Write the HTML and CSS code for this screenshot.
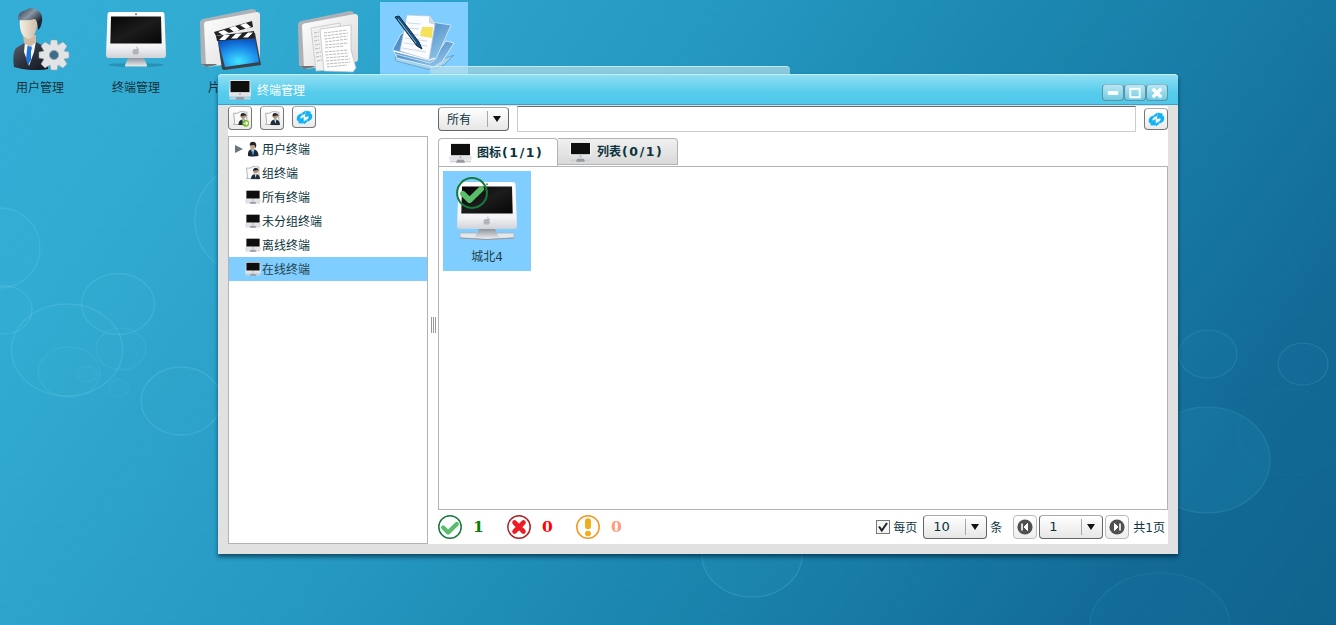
FILE: index.html
```html
<!DOCTYPE html>
<html lang="zh-CN">
<head>
<meta charset="utf-8">
<title>终端管理</title>
<link rel="stylesheet" href="styles.css">
</head>
<body>
<svg class="defs" aria-hidden="true">
  <defs>
    <linearGradient id="gWhite" x1="0" y1="0" x2="0" y2="1"><stop offset="0" stop-color="#fff"/><stop offset=".75" stop-color="#f4f4f6"/><stop offset="1" stop-color="#cfd2d8"/></linearGradient>
    <linearGradient id="gScreen" x1="0" y1="0" x2="1" y2="1"><stop offset="0" stop-color="#050505"/><stop offset=".5" stop-color="#1c1c1c"/><stop offset="1" stop-color="#050505"/></linearGradient>
    <linearGradient id="gFoot" x1="0" y1="0" x2="0" y2="1"><stop offset="0" stop-color="#8d949c"/><stop offset="1" stop-color="#eceef0"/></linearGradient>
    <linearGradient id="gSuit" x1="0" y1="0" x2="1" y2="1"><stop offset="0" stop-color="#5b6472"/><stop offset=".5" stop-color="#2c323d"/><stop offset="1" stop-color="#11151d"/></linearGradient>
    <linearGradient id="gHair" x1="0" y1="0" x2="1" y2="1"><stop offset="0" stop-color="#27313f"/><stop offset=".4" stop-color="#8a97a6"/><stop offset=".75" stop-color="#1b2431"/></linearGradient>
    <linearGradient id="gFace" x1="0" y1="0" x2="1" y2="0"><stop offset="0" stop-color="#f7efe2"/><stop offset="1" stop-color="#cbb9a4"/></linearGradient>
    <radialGradient id="gFilm" cx=".5" cy=".8" r=".8"><stop offset="0" stop-color="#3fe4ff"/><stop offset=".55" stop-color="#1e93ee"/><stop offset="1" stop-color="#0b56c4"/></radialGradient>
    <linearGradient id="gFolder" x1="0" y1="0" x2="1" y2="1"><stop offset="0" stop-color="#fff"/><stop offset="1" stop-color="#d9d9db"/></linearGradient>
    <linearGradient id="gBlue" x1="0" y1="0" x2="1" y2="1"><stop offset="0" stop-color="#2f6fb2"/><stop offset="1" stop-color="#9fd2f2"/></linearGradient>
    <symbol id="monitor" viewBox="0 0 60 56">
      <ellipse cx="30" cy="53" rx="28" ry="2" fill="#1c6f8e" opacity=".45"/>
      <path d="M22 46h16l3 7q.5 1.500-1 1.500H20q-1.500 0-1-1.500z" fill="url(#gFoot)"/>
      <path d="M4 0h52q2.500 0 2.500 3L60 43q0 3-3 3H3q-3 0-3-3L1.500 3Q1.500 0 4 0z" fill="url(#gWhite)"/>
      <path d="M5 4.500h50l.7 27H4.300z" fill="url(#gScreen)"/>
      <circle cx="30" cy="2.200" r="1" fill="#777"/>
      <path d="M30 37c2-1 3 0 3 0q-1.500 2 0 3.500-1 2.500-2.500 2.200-1-.4-2 0-2 0-2-3.200 0-3 3.500-2.500zm0-.7q0-1.600 1.500-1.800 0 1.500-1.500 1.800z" fill="#b1b5bb"/>
    </symbol>
    <symbol id="wideMonitor" viewBox="0 0 60 58">
      <path d="M3 51h54v5q-27 3-54 0z" fill="#e4e7ea" stroke="#aab3bb" stroke-width=".8"/>
      <path d="M22 47h16l4 8q-12 4-24 0z" fill="url(#gFoot)"/>
      <path d="M3 56q27 3 54 0" fill="none" stroke="#8d99a5"/>
      <path d="M4 0h52q2.500 0 2.500 3L60 44q0 3-3 3H3q-3 0-3-3L1.500 3Q1.500 0 4 0z" fill="url(#gWhite)"/>
      <path d="M5 4.500h50l.7 27H4.300z" fill="url(#gScreen)"/>
      <circle cx="30" cy="2.200" r="1" fill="#777"/>
      <path d="M30 37c2-1 3 0 3 0q-1.500 2 0 3.500-1 2.500-2.500 2.200-1-.4-2 0-2 0-2-3.200 0-3 3.500-2.500zm0-.7q0-1.600 1.500-1.800 0 1.500-1.500 1.800z" fill="#b1b5bb"/>
    </symbol>
    <symbol id="minimon" viewBox="0 0 23 20">
      <path d="M1 17.500h21v1.800H1z" fill="#d0d3d6"/>
      <path d="M8.500 16h6l1.500 3.800H7z" fill="#969ba1"/>
      <path d="M1.500 0h20l1 16.500H.5z" fill="url(#gWhite)"/>
      <path d="M.7 13.500h21.700l.1 3H.5z" fill="#dfe1e5"/>
      <path d="M2 .9h19v11.300H2z" fill="#0e0e0e"/>
      <circle cx="11.500" cy="14.200" r="1" fill="#a9adb4"/>
    </symbol>
    <symbol id="person" viewBox="0 0 36 62">
      <path d="M1 59Q-1 45 3 40L13 34l10 0 9 5q4 4 3 22-18 3-34-2z" fill="url(#gSuit)"/>
      <path d="M12 34l11-1-2 11-5 14-5-14z" fill="#f4f6fa"/>
      <path d="M14.500 38l3-1 1.500 3-1 3 0 9-3 5-2-6z" fill="#1d72d6"/>
      <path d="M10 27h13v7l-6 5-6-4z" fill="#cdbba6"/>
      <path d="M7 11q-1 9 2 15 3 5 8 5 6-3 8-18l-3-5z" fill="url(#gFace)"/>
      <path d="M5 12Q4 4 13 2q5-4 11 0 6 3 5 11-1 7-4 9 0-8-3-11-7 2-17 1z" fill="url(#gHair)"/>
    </symbol>
    <symbol id="miniPerson" viewBox="0 0 15 16">
      <path d="M2.500 15Q2 9.500 5 8.500h4.500q3.500 1.500 3.500 6.500-5 1-10.500 0z" fill="#1f2733"/>
      <path d="M5.500 8.500H9L7.600 14z" fill="#cfe6f6"/>
      <path d="M7 9.500h1l.3 3-.8 1.500-.8-1.500z" fill="#2a7fd0"/>
      <ellipse cx="7" cy="5.300" rx="2.400" ry="3.300" fill="#c9a888"/>
      <path d="M4.300 4.500Q4 .8 7.500.8q3.800.2 3.200 4.200L9.600 7.500 9 4z" fill="#20262e"/>
    </symbol>
    <symbol id="folder" viewBox="0 0 62 62">
      <path d="M1 54L0 14q0-3 3-4L52 0q3 0 4 2l0 46L3 57z" fill="#aeb2b7"/>
      <path d="M6 57L4 15q0-2 2-2.500L57 3q3 0 3 3v42q0 3-3 3L8 58z" fill="url(#gFolder)"/>
      <path d="M1 55l6 3 10-2-1-1-9 0z" fill="#6e7378"/>
    </symbol>
    <symbol id="contact" viewBox="0 0 16 16">
      <path d="M1.500 3Q5 4 8 1.500L14 2v12L1.500 13.500 2.500 12z" fill="#fafafa" stroke="#a5a5a5" stroke-width=".8"/>
      <path d="M6 14q0-4 3.500-5h2q3.500 1 3.500 5z" fill="#222b38"/>
      <path d="M9.500 9h2.200l-1 4z" fill="#b8def5"/>
      <circle cx="10.600" cy="6.200" r="2.300" fill="#b79274"/>
      <path d="M8 6Q8 2.500 11 3q3 0 2.400 3.500l-1-1.500z" fill="#252525"/>
    </symbol>
    <symbol id="refresh" viewBox="0 0 17 15">
      <path d="M1 10.500Q-.5 5.500 5 3.500L7 5Q3.500 6 4.700 8.700L7.500 7 8 13.500 2 13.200 3 11.800z" fill="#12b3f6"/>
      <path d="M16 4.500Q17.500 9.500 12 11.500L10 10Q13.500 9 12.300 6.300L9 7 9.500.5 15 1.800 14.300 3.200z" fill="#12b3f6"/>
      <path d="M5.500 3.300L9 .8v3L7 5z" fill="#12b3f6"/>
      <path d="M11.500 11.700L8 14.200v-3l2-1.200z" fill="#12b3f6"/>
    </symbol>
    <symbol id="ok" viewBox="0 0 24 24">
      <circle cx="12" cy="12" r="11.200" fill="none" stroke="#167a3d" stroke-width="1.500"/>
      <path d="M5.200 12.500l5 5L18.800 9" fill="none" stroke="#59bd69" stroke-width="4.300" stroke-linejoin="round" stroke-linecap="round"/>
    </symbol>
    <symbol id="bad" viewBox="0 0 24 24">
      <circle cx="12" cy="12" r="11.200" fill="none" stroke="#b01e24" stroke-width="1.500"/>
      <path d="M7.500 7.500l9 9m0-9l-9 9" fill="none" stroke="#ed1c24" stroke-width="4.600" stroke-linecap="round"/>
    </symbol>
    <symbol id="warn" viewBox="0 0 24 24">
      <circle cx="12" cy="12" r="11.200" fill="none" stroke="#f7941e" stroke-width="1.500"/>
      <path d="M12 6.200v5" stroke="#f0ad1c" stroke-width="6" stroke-linecap="round"/>
      <ellipse cx="12" cy="18.500" rx="3" ry="2.700" fill="#f0ad1c"/>
    </symbol>
    <symbol id="skip" viewBox="0 0 16 16">
      <circle cx="8" cy="8" r="7.600" fill="#505050"/>
      <path d="M5 4.500v7" stroke="#fff" stroke-width="1.600"/>
      <path d="M10.500 4.500L7 8l3.500 3.500z" fill="#fff" stroke="#fff"/>
    </symbol>
  </defs>
</svg>
<div class="desktop">
  <svg class="wallpaper" viewBox="0 0 1336 625">
    <g fill="#48bce0" fill-opacity=".05" stroke="#67cbe8" stroke-opacity=".3" stroke-width="1.300">
      <ellipse cx="0" cy="248" rx="40" ry="40"/>
      <ellipse cx="4" cy="310" rx="28" ry="24"/>
      <ellipse cx="118" cy="304" rx="36.500" ry="30.500"/>
      <ellipse cx="67" cy="350" rx="55.500" ry="46"/>
      <ellipse cx="121" cy="349" rx="25" ry="21" stroke-opacity=".16"/>
      <ellipse cx="69" cy="372" rx="31" ry="25" stroke-opacity=".16"/>
      <ellipse cx="87" cy="374" rx="10" ry="8" stroke-opacity=".14"/>
      <ellipse cx="119" cy="388" rx="10" ry="9" stroke-opacity=".12"/>
      <ellipse cx="181" cy="401" rx="40" ry="34"/>
      <ellipse cx="250" cy="220" rx="55" ry="55"/>
      <ellipse cx="752" cy="555" rx="50" ry="42" stroke-opacity=".22"/>
    </g>
    <g fill="#2592b9" fill-opacity=".08" stroke="#48a5c6" stroke-opacity=".28" stroke-width="1.200">
      <ellipse cx="1208" cy="354" rx="29" ry="24"/>
      <ellipse cx="1303" cy="364" rx="25" ry="21"/>
      <ellipse cx="1207" cy="460" rx="63" ry="53" fill-opacity=".2"/>
      <ellipse cx="1290" cy="432" rx="52" ry="43" fill="none" stroke-opacity=".08"/>
      <ellipse cx="1160" cy="626" rx="70" ry="53" stroke-opacity=".18"/>
    </g>
  </svg>

  <div class="shortcuts">
    <div class="shortcut">
      <svg class="shortcut-icon" viewBox="0 0 64 64">
        <use href="#person" x="5" y="2" width="36" height="62"/>
        <g transform="translate(46 49)">
          <g fill="#e1e3e5" stroke="#9ca0a4" stroke-width=".5">
            <path d="M-3-15h6l1 5 5-3 4 4-3 5 5 1v6l-5 1 3 5-4 4-5-3-1 5h-6l-1-5-5 3-4-4 3-5-5-1v-6l5-1-3-5 4-4 5 3z"/>
          </g>
          <circle r="4.600" fill="#3a6f8b" stroke="#a3a7ab"/>
        </g>
      </svg>
      <span>用户管理</span>
    </div>
    <div class="shortcut">
      <svg class="shortcut-icon" viewBox="0 0 64 64"><use href="#monitor" x="2" y="6" width="60" height="56"/></svg>
      <span>终端管理</span>
    </div>
    <div class="shortcut">
      <svg class="shortcut-icon" viewBox="0 0 64 64">
        <use href="#folder" x="0" y="3" width="62" height="62"/>
        <path d="M17 30l38-3 6 32-37 5-2-1z" fill="#39404a"/>
        <path d="M18 34l37-1 4 23-34 5z" fill="url(#gFilm)"/>
        <path d="M14 26l38-11 1 6-37 9z" fill="#202226"/>
        <path d="M18 26l6-2 5 3-6 2zM29 22l6-2 5 4-6 2zM40 19l6-2 5 4-5 2z" fill="#fff"/>
        <path d="M16 30l38-5 1 7-38 3z" fill="#202226"/>
        <path d="M19 34l5-5h6l-5 5zM31 32.500l5-5h6l-5 5zM43 31.500l5-5h5l-5 5z" fill="#fff"/>
      </svg>
      <span class="label-start">片</span>
    </div>
    <div class="shortcut">
      <svg class="shortcut-icon" viewBox="0 0 64 64">
        <use href="#folder" x="2" y="5" width="62" height="62"/>
        <path d="M15 22l29-5 4 46-28 2z" fill="#f0f0f0" stroke="#c2c2c2" stroke-width=".7"/>
        <path d="M24 23l31-4 0 25 5 18-3 4-29-1z" fill="#fff" stroke="#bbb" stroke-width=".7"/>
        <path d="M28 27l23-3M28 30l24-3M28.500 33l23-3M29 36l23-3M29 39l23-2M29 42l18-2M29 46l23-2M29.500 49l23-2M30 52l23-2M30 55l24-2M30.500 58l24-2M31 61l20-2M18 27l5-1M18 31l5-1M18 35l5-1M19 39l5-1M19 43l5-1M20 47l5-1M20 51l5-1M21 55l5-1" stroke="#aaa" stroke-width=".8" stroke-dasharray="3 .8"/>
      </svg>
    </div>
    <div class="shortcut selected">
      <svg class="shortcut-icon" viewBox="0 0 64 64">
        <path d="M3 51l40 4 17-5 2-1-10 10-10 4-7 0L4 55z" fill="#a5d3ee" stroke="#5d9ac4" stroke-width=".8"/>
        <path d="M3 46l38 7 13-18 8 2-12 19-8 5L5 52z" fill="url(#gBlue)" stroke="#e7f5fd" stroke-width=".8"/>
        <path d="M1 43l8-15 30-12 20 3-15 34-6 4L3 48z" fill="url(#gBlue)" stroke="#d5ecfa" stroke-width=".8"/>
        <path d="M2 45l35 9 6-2" fill="none" stroke="#fff" stroke-width="1.300"/>
        <path d="M15 9l23 1 5 8-6 36-29-9z" fill="#fafcff" stroke="#b9c5d1" stroke-width=".7"/>
        <path d="M16 17l12 1M15 22l12 1M14 27l13 2M13 32l22 3M12 37l23 3M10 42l24 4" stroke="#c2d1e3" stroke-width=".8"/>
        <path d="M37 10l0 7 6 2z" fill="#cbd6e0"/>
        <path d="M30 21l11 0-1 11-12-2z" fill="#f6e25a"/>
        <path d="M3 11l4-1 20 26 3 7-5-3z" fill="#1c527f" stroke="#102b44"/>
        <path d="M6 13l18 24" stroke="#8cc0e0"/>
      </svg>
    </div>
  </div>

  <div class="window-behind"></div>

  <section class="window">
    <header class="titlebar">
      <svg class="mini-monitor"><use href="#minimon"/></svg>
      <h1>终端管理</h1>
      <div class="controls">
        <button class="control"><svg viewBox="0 0 20 16"><path d="M4.500 8.500h11" stroke="#fff" stroke-width="4"/></svg></button>
        <button class="control"><svg viewBox="0 0 20 16"><path d="M5 4h10v9H5z" fill="none" stroke="#fff" stroke-width="2"/></svg></button>
        <button class="control"><svg viewBox="0 0 20 16"><path d="M5.500 4l9 9M14.500 4l-9 9" stroke="#fff" stroke-width="3.600"/></svg></button>
      </div>
    </header>
    <div class="content">
      <aside class="sidebar">
        <div class="tools">
          <button class="tool"><svg viewBox="0 0 16 16"><use href="#contact"/><circle cx="13" cy="12.500" r="3.200" fill="#79bd1f"/><path d="M11 12.500h3.600M13 10.700l1.800 1.800-1.800 1.800" stroke="#fff" fill="none"/></svg></button>
          <button class="tool"><svg viewBox="0 0 16 16"><use href="#contact"/></svg></button>
          <button class="tool short"><svg><use href="#refresh"/></svg></button>
        </div>
        <ul class="tree">
          <li><i class="twisty"></i><svg><use href="#miniPerson"/></svg><span>用户终端</span></li>
          <li><i></i><svg><use href="#contact"/></svg><span>组终端</span></li>
          <li><i></i><svg><use href="#minimon"/></svg><span>所有终端</span></li>
          <li><i></i><svg><use href="#minimon"/></svg><span>未分组终端</span></li>
          <li><i></i><svg><use href="#minimon"/></svg><span>离线终端</span></li>
          <li class="current"><i></i><svg><use href="#minimon"/></svg><span>在线终端</span></li>
        </ul>
      </aside>
      <div class="splitter"><i></i></div>
      <main class="main">
        <div class="search">
          <div class="select filter"><span>所有</span><i></i></div>
          <input class="query" type="text" aria-label="搜索">
          <button class="tool short"><svg><use href="#refresh"/></svg></button>
        </div>
        <nav class="tabs">
          <div class="tab active"><svg><use href="#minimon"/></svg><span>图标<b>(1/1)</b></span></div>
          <div class="tab"><svg><use href="#minimon"/></svg><span>列表<b>(0/1)</b></span></div>
        </nav>
        <div class="panel">
          <div class="terminal">
            <div class="terminal-icon">
              <svg class="terminal-monitor"><use href="#wideMonitor"/></svg>
              <svg class="terminal-state"><use href="#ok"/></svg>
            </div>
            <span>城北4</span>
          </div>
        </div>
        <footer class="status">
          <div class="count green"><svg><use href="#ok"/></svg><span>1</span></div>
          <div class="count red"><svg><use href="#bad"/></svg><span>0</span></div>
          <div class="count orange"><svg><use href="#warn"/></svg><span>0</span></div>
          <div class="pager">
            <span class="check"><svg viewBox="0 0 12 12"><path d="M2 5.500l2.800 4L10 2" fill="none" stroke="#222" stroke-width="2"/></svg></span>
            <span class="per">每页</span>
            <div class="select num"><span>10</span><i></i></div>
            <span class="unit">条</span>
            <button class="page-btn"><svg><use href="#skip"/></svg></button>
            <div class="select num"><span>1</span><i></i></div>
            <button class="page-btn next"><svg><use href="#skip"/></svg></button>
            <span class="total">共1页</span>
          </div>
        </footer>
      </main>
    </div>
  </section>
</div>
</body>
</html>
```
FILE: styles.css
```css
* { box-sizing: border-box; }
body {
  margin: 0;
  font: 12px/16px "DejaVu Sans", "Noto Sans CJK SC", sans-serif;
  color: #0b333c;
}
svg { display: block; flex: none; }
button { padding: 0; font: inherit; }
.defs { position: absolute; width: 0; height: 0; }
.desktop {
  position: relative;
  width: 1336px;
  height: 625px;
  overflow: hidden;
  background: linear-gradient(125deg, #34aed6 0%, #31abd2 14%, #2b9fc8 30%, #2699c2 40%, #1c89b2 57%, #177aa4 73%, #126a95 87%, #0f648d 100%);
}
.wallpaper { position: absolute; inset: 0; width: 1336px; height: 625px; }

.shortcuts { position: relative; display: flex; gap: 8px; margin-left: -4px; padding-top: 2px; }
.shortcut {
  display: flex;
  flex-direction: column;
  align-items: center;
  gap: 10px;
  width: 88px;
  height: 100px;
  padding-top: 4px;
  color: #17323d;
}
.shortcut.selected { background: #7fceff; }
.shortcut-icon { width: 64px; height: 64px; overflow: visible; }
.label-start { padding-right: 36px; }

.window-behind {
  position: absolute;
  left: 430px;
  top: 66px;
  width: 360px;
  height: 200px;
  border-top: 1px solid #c4ebf5;
  border-radius: 4px 4px 0 0;
  background: rgba(181, 224, 235, .7);
}
.window {
  position: absolute;
  left: 218px;
  top: 74px;
  width: 960px;
  height: 480px;
  display: flex;
  flex-direction: column;
  border-radius: 4px 4px 0 0;
  background: #e2e1e1;
  box-shadow: 0 3px 4px rgba(0, 35, 55, .65);
}
.titlebar {
  display: flex;
  align-items: center;
  height: 31px;
  padding: 0 10px;
  border-top: 1px solid #c4f1fa;
  border-bottom: 1px solid #3b9fbd;
  border-radius: 4px 4px 0 0;
  background: linear-gradient(#8fdff3, #57ccec 60%, #4fc8eb);
}
.mini-monitor { width: 24px; height: 20px; }
.titlebar h1 { margin: 3px 0 0 5px; font-size: 12px; font-weight: 400; color: #fff; }
.controls { display: flex; margin: 6px 0 0 auto; }
.control {
  width: 22px;
  height: 17px;
  border: 1px solid #5d91a3;
  border-top-color: #8db9c6;
  border-radius: 4px;
  background: linear-gradient(#b7e7f3, #72cbe2);
}
.control svg { width: 20px; height: 15px; }

.content { flex: 1; display: flex; margin: 1px 10px 10px; background: #fff; min-height: 0; }
.sidebar { width: 200px; display: flex; flex-direction: column; }
.tools { display: flex; gap: 8px; height: 30px; }
.tool {
  display: grid;
  place-items: center;
  width: 24px;
  height: 24px;
  border: 1px solid #777;
  border-top-color: #aaa;
  border-radius: 4px;
  background: linear-gradient(#fff, #eaeaea);
}
.tool svg { width: 17px; height: 17px; }
.tool.short { height: 22px; }
.tool.short svg { width: 17px; height: 15px; }
.tree {
  flex: 1;
  margin: 0;
  padding: 0;
  list-style: none;
  border: 1px solid #b2b3b6;
}
.tree li { display: flex; align-items: center; height: 24px; padding-left: 6px; }
.tree li i { width: 10px; }
.tree li span { padding-top: 2px; }
.tree svg { width: 16px; height: 16px; margin: 0 1px 0 0; }
.tree .twisty {
  width: 8px;
  height: 8px;
  margin-right: 2px;
  background: #6c7478;
  clip-path: polygon(0 0, 100% 50%, 0 100%);
}
.tree .current { background: #7fceff; color: #27414c; }

.splitter { width: 10px; display: grid; place-items: center; }
.splitter i {
  width: 5px;
  height: 16px;
  background: repeating-linear-gradient(90deg, #999 0 1px, #fff 1px 2px);
}

.main { flex: 1; display: flex; flex-direction: column; min-width: 0; }
.search { display: flex; align-items: flex-start; height: 32px; }
.select {
  display: flex;
  align-items: center;
  height: 24px;
  border: 1px solid #656565;
  border-top-color: #aaa;
  border-radius: 4px;
  background: linear-gradient(#fff, #e6e6e6);
}
.select span { flex: 1; }
.select i { position: relative; width: 21px; height: 16px; border-left: 1px solid #a7a7a7; }
.select i::after {
  content: "";
  position: absolute;
  left: 5px;
  top: 5px;
  border: solid transparent;
  border-width: 6px 4px 0;
  border-top-color: #111;
}
.filter { width: 71px; margin: 1px 8px 0 0; padding-left: 8px; }
.filter span { padding-top: 2px; }
.query {
  width: 619px;
  height: 26px;
  margin-right: 8px;
  padding: 0 4px;
  border: 1px solid #ccc;
  border-top-color: #686868;
  background: #fff;
}
.search .tool { margin-top: 2px; }
.tabs { display: flex; height: 28px; }
.tab {
  display: flex;
  align-items: center;
  width: 120px;
  height: 27px;
  padding-left: 11px;
  gap: 5px;
  border: 1px solid #b2b3b6;
  border-left-width: 0;
  border-radius: 0 4px 0 0;
  background: linear-gradient(#f0f0f0, #d9d9d9);
  font-weight: 700;
}
.tab.active { height: 28px; border-left-width: 1px; border-radius: 4px 4px 0 0; border-bottom: 0; background: #fff; padding-left: 10px; }
.tab span { display: flex; padding-top: 1px; }
.tab b { margin-left: 1px; font-size: 12.500px; letter-spacing: 1.600px; }
.tab svg { width: 23px; height: 20px; }
.panel { flex: 1; padding: 4px; border: 1px solid #b2b3b6; }
.terminal {
  display: flex;
  flex-direction: column;
  align-items: center;
  gap: 7px;
  width: 88px;
  height: 100px;
  padding-top: 6px;
  background: #7fceff;
  color: #243d49;
}
.terminal-icon { position: relative; width: 64px; height: 65px; }
.terminal-monitor { width: 60px; height: 58px; margin: 5px 0 0 2px; }
.terminal-state { position: absolute; left: 1px; top: 0; width: 32px; height: 32px; }

.status { display: flex; align-items: center; height: 34px; }
.count {
  display: flex;
  align-items: center;
  gap: 11px;
  width: 69px;
  font: 700 15.500px/20px "DejaVu Serif", serif;
}
.count span { padding-bottom: 1px; }
.count svg { width: 24px; height: 24px; }
.green { color: #078006; }
.red { color: #f00; }
.orange { color: #ff9b78; }
.pager { display: flex; align-items: center; margin-left: auto; padding-right: 3px; }
.check { width: 14px; height: 14px; border: 1px solid #777; background: #f4f4f4; }
.check svg { width: 12px; height: 12px; }
.per { margin: 2px 6px 0 3px; }
.num { width: 64px; padding-left: 9px; font-size: 13px; }
.unit { margin: 2px 11px 0 3px; }
.total { margin-top: 2px; }
.page-btn {
  display: grid;
  place-items: center;
  width: 24px;
  height: 24px;
  margin-right: 2px;
  border: 1px solid #bbb;
  border-radius: 4px;
  background: linear-gradient(#fff, #eee);
}
.page-btn svg { width: 16px; height: 16px; }
.next { margin: 0 4px 0 2px; }
.next svg { transform: scaleX(-1); }
```
